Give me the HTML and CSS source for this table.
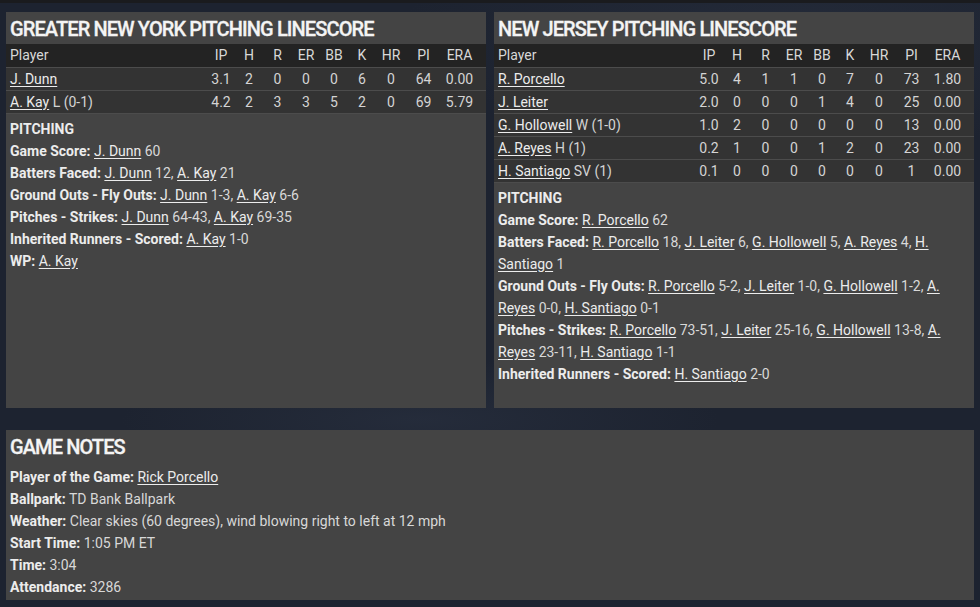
FILE: index.html
```html
<!DOCTYPE html>
<html lang="en">
<head>
<meta charset="utf-8">
<title>Pitching Linescore</title>
<link rel="stylesheet" href="styles.css">
</head>
<body>
<div class="page">
  <div class="top">
    <section class="panel">
      <h2 class="panel-title">GREATER NEW YORK PITCHING LINESCORE</h2>
      <table class="line">
        <colgroup>
          <col class="c-player"><col class="c-ip"><col class="c-h"><col class="c-r"><col class="c-er"><col class="c-bb"><col class="c-k"><col class="c-hr"><col class="c-pi"><col class="c-era">
        </colgroup>
        <thead>
          <tr><th class="pl">Player</th><th>IP</th><th>H</th><th>R</th><th>ER</th><th>BB</th><th>K</th><th>HR</th><th>PI</th><th class="era">ERA</th></tr>
        </thead>
        <tbody>
          <tr><td class="pl"><a href="#">J. Dunn</a></td><td>3.1</td><td>2</td><td>0</td><td>0</td><td>0</td><td>6</td><td>0</td><td>64</td><td class="era">0.00</td></tr>
          <tr><td class="pl"><a href="#">A. Kay</a> L (0-1)</td><td>4.2</td><td>2</td><td>3</td><td>3</td><td>5</td><td>2</td><td>0</td><td>69</td><td class="era">5.79</td></tr>
        </tbody>
      </table>
      <div class="notes">
        <p><b>PITCHING</b></p>
        <p><b>Game Score:</b> <a href="#">J. Dunn</a> 60</p>
        <p><b>Batters Faced:</b> <a href="#">J. Dunn</a> 12, <a href="#">A. Kay</a> 21</p>
        <p><b>Ground Outs - Fly Outs:</b> <a href="#">J. Dunn</a> 1-3, <a href="#">A. Kay</a> 6-6</p>
        <p><b>Pitches - Strikes:</b> <a href="#">J. Dunn</a> 64-43, <a href="#">A. Kay</a> 69-35</p>
        <p><b>Inherited Runners - Scored:</b> <a href="#">A. Kay</a> 1-0</p>
        <p><b>WP:</b> <a href="#">A. Kay</a></p>
      </div>
    </section>
    <section class="panel">
      <h2 class="panel-title">NEW JERSEY PITCHING LINESCORE</h2>
      <table class="line">
        <colgroup>
          <col class="c-player"><col class="c-ip"><col class="c-h"><col class="c-r"><col class="c-er"><col class="c-bb"><col class="c-k"><col class="c-hr"><col class="c-pi"><col class="c-era">
        </colgroup>
        <thead>
          <tr><th class="pl">Player</th><th>IP</th><th>H</th><th>R</th><th>ER</th><th>BB</th><th>K</th><th>HR</th><th>PI</th><th class="era">ERA</th></tr>
        </thead>
        <tbody>
          <tr><td class="pl"><a href="#">R. Porcello</a></td><td>5.0</td><td>4</td><td>1</td><td>1</td><td>0</td><td>7</td><td>0</td><td>73</td><td class="era">1.80</td></tr>
          <tr><td class="pl"><a href="#">J. Leiter</a></td><td>2.0</td><td>0</td><td>0</td><td>0</td><td>1</td><td>4</td><td>0</td><td>25</td><td class="era">0.00</td></tr>
          <tr><td class="pl"><a href="#">G. Hollowell</a> W (1-0)</td><td>1.0</td><td>2</td><td>0</td><td>0</td><td>0</td><td>0</td><td>0</td><td>13</td><td class="era">0.00</td></tr>
          <tr><td class="pl"><a href="#">A. Reyes</a> H (1)</td><td>0.2</td><td>1</td><td>0</td><td>0</td><td>1</td><td>2</td><td>0</td><td>23</td><td class="era">0.00</td></tr>
          <tr><td class="pl"><a href="#">H. Santiago</a> SV (1)</td><td>0.1</td><td>0</td><td>0</td><td>0</td><td>0</td><td>0</td><td>0</td><td>1</td><td class="era">0.00</td></tr>
        </tbody>
      </table>
      <div class="notes">
        <p><b>PITCHING</b></p>
        <p><b>Game Score:</b> <a href="#">R. Porcello</a> 62</p>
        <p><b>Batters Faced:</b> <a href="#">R. Porcello</a> 18, <a href="#">J. Leiter</a> 6, <a href="#">G. Hollowell</a> 5, <a href="#">A. Reyes</a> 4, <a href="#">H. Santiago</a> 1</p>
        <p><b>Ground Outs - Fly Outs:</b> <a href="#">R. Porcello</a> 5-2, <a href="#">J. Leiter</a> 1-0, <a href="#">G. Hollowell</a> 1-2, <a href="#">A. Reyes</a> 0-0, <a href="#">H. Santiago</a> 0-1</p>
        <p><b>Pitches - Strikes:</b> <a href="#">R. Porcello</a> 73-51, <a href="#">J. Leiter</a> 25-16, <a href="#">G. Hollowell</a> 13-8, <a href="#">A. Reyes</a> 23-11, <a href="#">H. Santiago</a> 1-1</p>
        <p><b>Inherited Runners - Scored:</b> <a href="#">H. Santiago</a> 2-0</p>
      </div>
    </section>
  </div>
  <section class="panel game-notes">
    <h2 class="panel-title">GAME NOTES</h2>
    <div class="notes">
      <p><b>Player of the Game:</b> <a href="#">Rick Porcello</a></p>
      <p><b>Ballpark:</b> TD Bank Ballpark</p>
      <p><b>Weather:</b> Clear skies (60 degrees), wind blowing right to left at 12 mph</p>
      <p><b>Start Time:</b> 1:05 PM ET</p>
      <p><b>Time:</b> 3:04</p>
      <p><b>Attendance:</b> 3286</p>
    </div>
  </section>
</div>
</body>
</html>
```

FILE: styles.css
```css
* { box-sizing: border-box; }
html, body { height: 100%; }
body {
  margin: 0;
  background:
    linear-gradient(#1a1b1e 0, #1a1b1e 3px, transparent 3px),
    radial-gradient(ellipse 300px 60px at 420px 420px, rgba(60,70,90,0.25), transparent),
    radial-gradient(ellipse 400px 120px at 800px 30px, rgba(60,70,90,0.2), transparent),
    #1d2330;
  color: #dcdcdc;
  font-family: Roboto, "Open Sans", sans-serif;
  font-size: 14px;
  overflow: hidden;
}
.page {
  width: 980px;
  padding: 12px 6px 0 6px;
}
.top {
  display: grid;
  grid-template-columns: 480px 480px;
  gap: 8px;
}
.panel {
  background: #444444;
  height: 396px;
}
.panel-title {
  margin: 0;
  height: 32px;
  line-height: 34px;
  padding-left: 4px;
  font-size: 20px;
  font-weight: 500;
  color: #f4f4f4;
  letter-spacing: -0.9px;
  -webkit-text-stroke: 0.3px #f4f4f4;
}
.line {
  width: 100%;
  border-collapse: collapse;
  table-layout: fixed;
}
.c-ip { width: 28px; }
.c-h { width: 28px; }
.c-r { width: 29px; }
.c-er { width: 28px; }
.c-bb { width: 28px; }
.c-k { width: 28px; }
.c-hr { width: 30px; }
.c-pi { width: 35px; }
.c-era { width: 45px; }
.line th, .line td {
  height: 23px;
  padding: 0;
  text-align: center;
  font-weight: 400;
  white-space: nowrap;
}
.line thead tr { background: #232323; }
.line thead th { color: #d8d8d8; }
.line tbody tr { background: #333333; border-top: 1px solid #4c4c4c; }
.line tbody tr:last-child { border-bottom: 1px solid #4c4c4c; }
.line td { color: #d4d4d4; }
.line .pl { text-align: left; padding-left: 4px; }
.line .era { padding-right: 8px; }
a { color: #ececec; text-decoration: underline; text-underline-offset: 2px; }
.notes { padding: 4px 4px 0 4px; }
.notes p { margin: 0; line-height: 22px; color: #d8d8d8; }
.notes b { color: #ececec; font-weight: 700; }
.game-notes {
  margin-top: 22px;
  height: 170px;
}
```
